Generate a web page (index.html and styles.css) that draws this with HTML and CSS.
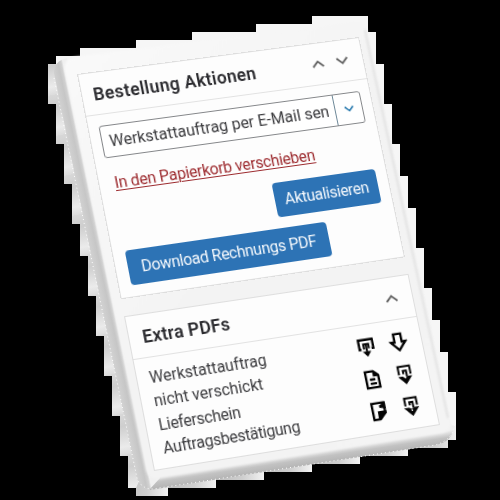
FILE: index.html
```html
<!DOCTYPE html>
<html lang="de">
<head>
<meta charset="utf-8">
<title>Bestellung Aktionen</title>
<link rel="stylesheet" href="styles.css">
</head>
<body>
<div class="stage">
  <svg class="slab" viewBox="0 0 500 500" aria-hidden="true">
    <defs>
      <linearGradient id="halo" gradientUnits="userSpaceOnUse" x1="0" y1="64" x2="8" y2="104" spreadMethod="repeat">
        <stop offset="0" stop-color="#d8d8d8"/><stop offset=".3" stop-color="#cecece"/><stop offset=".8" stop-color="#ebebeb"/><stop offset="1" stop-color="#dcdcdc"/>
      </linearGradient>
      <linearGradient id="haloLow" gradientUnits="userSpaceOnUse" x1="168" y1="0" x2="216" y2="0" spreadMethod="repeat">
        <stop offset="0" stop-color="#bdbdbd"/><stop offset=".55" stop-color="#cecece"/><stop offset="1" stop-color="#f2f2f2"/>
      </linearGradient>
      <linearGradient id="side" gradientUnits="userSpaceOnUse" x1="95" y1="276" x2="107" y2="273.500">
        <stop offset="0" stop-color="#d2d2d2"/><stop offset=".6" stop-color="#c6c6c6"/><stop offset=".85" stop-color="#d2d2d2"/><stop offset="1" stop-color="#f0f0f0"/>
      </linearGradient>
      <linearGradient id="under" gradientUnits="userSpaceOnUse" x1="290" y1="455" x2="292" y2="468">
        <stop offset="0" stop-color="#f0f0f0"/><stop offset=".5" stop-color="#c2c2c2"/><stop offset="1" stop-color="#b4b4b4"/>
      </linearGradient>
      <linearGradient id="face" x1="0" y1="0" x2="1" y2="1">
        <stop offset="0" stop-color="#fafafa"/><stop offset=".5" stop-color="#f3f3f3"/><stop offset="1" stop-color="#f4f4f4"/>
      </linearGradient>
      <filter id="soft"><feGaussianBlur stdDeviation=".9"/></filter>
    </defs>
    <path fill="url(#halo)" d="M48 64H56V56H80V48H136V40H192V32H256V24H312V16H368V32H376V64H384V104H392V144H400V176H408V208H416V248H424V288H432V320H440V352H448V392H456V440H448V448H408V456H360V464H312V472H264V480H216V488H168V496H136V488H128V456H120V416H112V376H104V336H96V296H88V256H80V224H72V184H64V144H56V104H48Z"/>
    <path fill="#f6f6f6" d="M56 64V56H80V48H136V40H192V32H256V24H312V16H368V32H376V64H384V104H392V144H400V176H408V208H416V248H424V288H432V320H440V352H448V392H456V430L300 300Z"/>
    <path fill="url(#haloLow)" d="M456 425V440H448V448H408V456H360V464H312V472H264V480H216V488H168V496H136V488L145 468Z"/>
    <path fill="url(#under)" d="M140 460L150 490L436 445Q453 441 453 428L445 410Z"/>
    <path fill="url(#side)" d="M54 73Q54 61 67 58L160 478L150 489Q139 488 136 475Z"/>
    <path fill="none" stroke="#fff" stroke-dasharray="1 3" d="M54 78L137 478Q141 489 153 489L435 445Q454 440 455 422"/>
    <path fill="url(#face)" filter="url(#soft)" d="M65 71Q63 60 74 57L355 22Q364 21 367 31L450 419Q453 430 442 433L160 478Q149 480 146 470Z"/>
    <path fill="none" stroke="#d2d2d2" stroke-width="2" d="M365 30L448 418" opacity=".55" filter="url(#soft)"/>
  </svg>

  <main class="card">
    <section class="panel panel-actions">
      <header class="panel-head">
        <h2>Bestellung Aktionen</h2>
        <svg class="chev" viewBox="0 0 14 10"><path d="M1.500 8L7 2.500L12.500 8"/></svg>
        <svg class="chev" viewBox="0 0 14 10"><path d="M1.500 2L7 7.500L12.500 2"/></svg>
      </header>
      <div class="select">
        <span class="value">Werkstattauftrag per E-Mail sen</span>
        <span class="toggle"><svg class="chev small" viewBox="0 0 14 10"><path d="M2 2L7 7L12 2"/></svg></span>
      </div>
      <a class="trash">In den Papierkorb verschieben</a>
      <button class="btn update">Aktualisieren</button>
      <button class="btn download">Download Rechnungs PDF</button>
    </section>

    <section class="panel panel-pdfs">
      <header class="panel-head">
        <h2 class="short">Extra PDFs</h2>
        <svg class="chev" viewBox="0 0 14 10"><path d="M1.500 8L7 2.500L12.500 8"/></svg>
      </header>
      <div class="files">
        <ul class="names">
          <li class="wide">Werkstattauftrag</li>
          <li class="wide">nicht verschickt</li>
          <li>Lieferschein</li>
          <li>Auftragsbestätigung</li>
        </ul>
        <div class="icons">
          <svg viewBox="0 0 20 22"><path d="M4.500 13.500H2.500V3H18V13H16"/><path class="thin" d="M7.500 13.500V8H13V13M10.300 8V18"/><path class="solid" d="M5.500 16H15L10.300 22Z"/></svg>
          <svg viewBox="0 0 20 22"><path d="M6 2H14V11H18L10 20L2 11H6Z"/></svg>
          <svg viewBox="0 0 20 22"><path d="M3 2H12L17 7V20H3ZM7 11H13M7 15.500H14"/><path class="solid" d="M11 2L18 8H11Z"/></svg>
          <svg viewBox="0 0 20 22"><path class="thin" d="M3.500 11V2H16.500V11M8.500 10.500V7H12V14"/><path class="solid" d="M2 13H7L10 15.500L13.500 13H18L10 22Z"/></svg>
          <svg viewBox="0 0 20 22"><path d="M3 2H16.500V13L10 20H3Z"/><path class="solid" d="M18 1V9L11 7.500V5ZM8.500 11H18V14L10 21L8 20Z"/></svg>
          <svg viewBox="0 0 20 22"><path class="thin" d="M3.500 10.500V2H16.500V10.500M8.500 10V6.500H12V13"/><path class="solid" d="M1.500 12.500H7L10 14L13 12.500H18.500L10 22Z"/><path class="nick" d="M10 14.500V16.500"/></svg>
        </div>
      </div>
    </section>
  </main>
</div>
</body>
</html>
```
FILE: styles.css
```css
* { box-sizing: border-box; }

body {
  margin: 0;
  background: #000;
  font-family: Roboto, "Liberation Sans", sans-serif;
  color: #3c3c3f;
}

.stage {
  position: relative;
  width: 500px;
  height: 500px;
  overflow: hidden;
}

.slab {
  position: absolute;
  inset: 0;
  width: 500px;
  height: 500px;
}

/* Tilts the flat 288 x 400 card onto the face of the slab. */
.card {
  position: absolute;
  top: 0;
  left: 0;
  display: flex;
  flex-direction: column;
  gap: 17px;
  width: 288px;
  height: 400px;
  transform-origin: 0 0;
  transform: matrix3d(1.005139, -0.125799, 0, 0.00007236, 0.18485, 0.969075, 0, -0.000049725, 0, 0, 1, 0, 77, 74, 0, 1);
}

.panel {
  display: flex;
  flex-direction: column;
  border: 1px solid #dedede;
  background: #fdfdfd;
}

.panel-actions { height: 229px; }
.panel-pdfs { height: 154px; }

.panel-head {
  display: flex;
  align-items: center;
  gap: 11px;
  height: 43px;
  padding: 0 14px 0 11px;
  border-bottom: 1px solid #e2e2e2;
}

h2 {
  flex: 1;
  margin: 2px 0 0;
  font-size: 17.5px;
  font-weight: 600;
  line-height: 22px;
  letter-spacing: 0.37px;
  color: #2c2c30;
  white-space: nowrap;
}

h2.short {
  letter-spacing: 0.15px;
  padding-left: 2px;
}

.chev {
  width: 14px;
  height: 10px;
  fill: none;
  stroke: #666;
  stroke-width: 1.9;
}

.chev.small {
  width: 12px;
  stroke: #2879ae;
}

.select {
  display: flex;
  width: 266px;
  height: 33px;
  margin: 11px 0 0 10px;
  border: 1px solid #85878a;
  border-radius: 3px;
  background: #fff;
}

.value {
  flex: 1;
  padding-left: 7px;
  font-size: 16px;
  line-height: 32px;
  letter-spacing: -0.03px;
  white-space: nowrap;
}

.toggle {
  display: flex;
  align-items: center;
  justify-content: center;
  width: 28px;
  border-left: 1px solid #6c8797;
}

.trash {
  align-self: flex-start;
  margin: 15px 0 0 15px;
  font-size: 15.7px;
  line-height: 22px;
  letter-spacing: -0.25px;
  color: #9c2a2e;
  text-decoration: underline;
  text-underline-offset: 2px;
  text-decoration-thickness: 1px;
  white-space: nowrap;
}

.btn {
  height: 35px;
  padding: 0;
  border: 0;
  border-radius: 4px;
  background: #2d73b5;
  color: #f4f8fc;
  font: 15.7px/36px Roboto, "Liberation Sans", sans-serif;
  letter-spacing: -0.35px;
  white-space: nowrap;
}

.update {
  align-self: flex-end;
  width: 106px;
  margin: 11px 11px 0 0;
}

.download {
  width: 203px;
  margin: 11px 0 0 12px;
}

.files {
  display: flex;
  justify-content: space-between;
  padding: 9px 14px 0 12px;
}

.names {
  margin: 0;
  padding: 0;
  list-style: none;
  font-size: 15.6px;
  line-height: 23.4px;
  letter-spacing: -0.28px;
}

.names .wide { letter-spacing: 0; }

.icons {
  display: grid;
  grid-template-columns: 19px 19px;
  grid-auto-rows: 20px;
  gap: 12.5px 14px;
  margin-top: 3px;
}

.icons svg {
  width: 19px;
  height: 20px;
  fill: none;
  stroke: #050505;
  stroke-width: 2.6;
}

.icons .thin { stroke-width: 2.2; }

.icons .solid {
  fill: #050505;
  stroke: none;
}

.icons .nick {
  stroke: #fff;
  stroke-width: 1.4;
}
```
